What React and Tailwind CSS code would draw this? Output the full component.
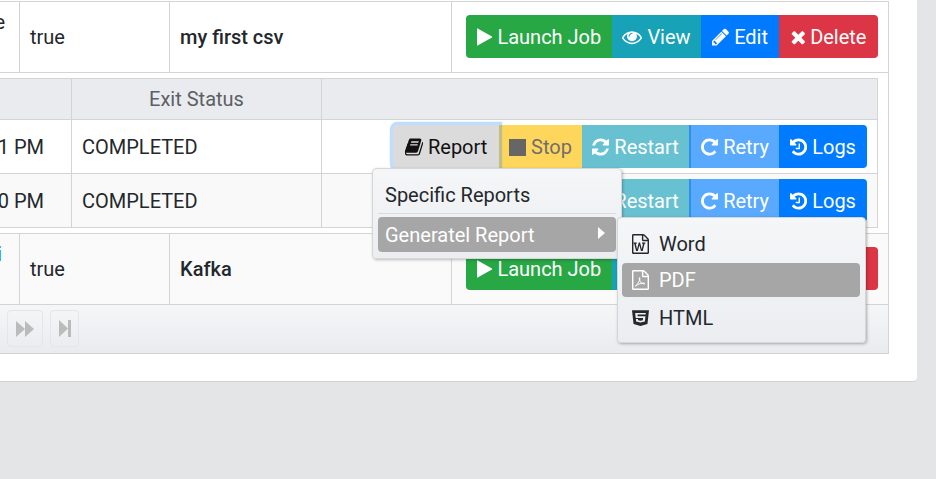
import React from "react";
import { FaHtml5 } from "react-icons/fa";

// Font Awesome 4 glyphs, on the 1792 grid
const PATHS = {
  play: "M1576 927l-1328 738q-23 13-39.500 3t-16.500-36v-1472q0-26 16.500-36t39.500 3l1328 738q23 13 23 31t-23 31z",
  eye: "M1664 960q-152-236-381-353 61 104 61 225 0 185-131.500 316.500t-316.500 131.500-316.500-131.500-131.500-316.500q0-121 61-225-229 117-381 353 133 205 333.500 326.500t434.500 121.500 434.500-121.500 333.500-326.500zm-720-384q0-20-14-34t-34-14q-125 0-214.500 89.500t-89.500 214.500q0 20 14 34t34 14 34-14 14-34q0-86 61-147t147-61q20 0 34-14t14-34zm848 384q0 34-20 69-140 230-376.500 368.500t-499.500 138.500-499.500-139-376.500-368q-20-35-20-69t20-69q140-229 376.500-368t499.500-139 499.500 139 376.500 368q20 35 20 69z",
  pencil: "M491 1536l91-91-235-235-91 91v107h128v128h107zm523-928q0-22-22-22-10 0-17 7l-542 542q-7 7-7 17 0 22 22 22 10 0 17-7l542-542q7-7 7-17zm-54-192l416 416-832 832h-416v-416zm683 96q0 53-37 90l-166 166-416-416 166-165q36-38 90-38 53 0 91 38l235 234q37 39 37 91z",
  times: "M1490 1322q0 40-28 68l-136 136q-28 28-68 28t-68-28l-294-294-294 294q-28 28-68 28t-68-28l-136-136q-28-28-28-68t28-68l294-294-294-294q-28-28-28-68t28-68l136-136q28-28 68-28t68 28l294 294 294-294q28-28 68-28t68 28l136 136q28 28 28 68t-28 68l-294 294 294 294q28 28 28 68z",
  book: "M1639 478q40 57 18 129l-275 906q-19 64-76.500 107.500t-122.500 43.500h-923q-77 0-148.500-53.500t-99.500-131.500q-24-67-2-127 0-4 3-27t4-37q1-8-3-21.500t-3-19.500q2-11 8-21t16.500-23.500 16.500-23.500q23-38 45-91.500t30-91.500q3-10 .5-30t-.5-28q3-11 17-28t17-23q21-36 42-92t25-90q1-9-2.500-32t.5-28q4-13 22-30.500t22-22.500q19-26 42.500-84.500t27.500-96.500q1-8-3-25.500t-2-26.500q2-8 9-18t18-23 17-21q8-12 16.500-30.500t15-35 16-36 19.500-32 26.500-23.500 36-11.500 47.500 5.500l-1 3q38-9 51-9h761q74 0 114 56t18 130l-274 906q-36 119-71.500 153.500t-128.500 34.500h-869q-27 0-38 15-11 16-1 43 24 70 144 70h923q29 0 56-15.500t35-41.500l300-987q7-22 5-57 38 15 59 43zm-1064 2q-4 13 2 22.500t20 9.500h608q13 0 25.500-9.500t16.500-22.500l21-64q4-13-2-22.500t-20-9.500h-608q-13 0-25.500 9.500t-16.500 22.500zm-83 256q-4 13 2 22.500t20 9.500h608q13 0 25.500-9.500t16.500-22.500l21-64q4-13-2-22.500t-20-9.500h-608q-13 0-25.500 9.500t-16.500 22.500z",
  refresh: "M1639 1056q0 5-1 7-64 268-268 434.500t-478 166.500q-146 0-282.500-55t-243.500-157l-129 129q-19 19-45 19t-45-19-19-45v-448q0-26 19-45t45-19h448q26 0 45 19t19 45-19 45l-137 137q71 66 161 102t187 36q134 0 250-65t186-179q11-17 53-117 8-23 30-23h192q13 0 22.500 9.500t9.500 22.500zm25-800v448q0 26-19 45t-45 19h-448q-26 0-45-19t-19-45 19-45l138-138q-148-137-349-137-134 0-250 65t-186 179q-11 17-53 117-8 23-30 23h-199q-13 0-22.500-9.500t-9.500-22.500v-7q65-268 270-434.500t480-166.500q146 0 284 55.500t245 156.500l130-129q19-19 45-19t45 19 19 45z",
  repeat: "M1664 256v448q0 26-19 45t-45 19h-448q-42 0-59-40-17-39 14-69l138-138q-148-137-349-137-104 0-198.500 40.500t-163.500 109.500-109.500 163.500-40.500 198.500 40.500 198.500 109.500 163.500 163.500 109.500 198.500 40.500q119 0 225-52t179-147q7-10 23-12 15 0 25 9l137 138q9 8 9.500 20.500t-7.500 22.500q-109 132-264 204.500t-327 72.500q-156 0-298-61t-245-164-164-245-61-298 61-298 164-245 245-164 298-61q147 0 284.500 55.500t244.500 156.500l130-129q29-31 70-14 39 17 39 59z",
  history: "M1664 896q0 156-61 298t-164 245-245 164-298 61q-172 0-327-72.500t-264-204.500q-7-10-6.500-22.500t8.500-20.500l137-138q10-9 25-9 16 2 23 12 73 95 179 147t225 52q104 0 198.500-40.500t163.500-109.500 109.500-163.500 40.500-198.500-40.500-198.500-109.500-163.500-163.500-109.500-198.500-40.500q-98 0-188 35.500t-160 101.500l137 138q31 30 14 69-17 40-59 40h-448q-26 0-45-19t-19-45v-448q0-42 40-59 39-17 69 14l130 129q107-101 244.500-156.500t284.500-55.500q156 0 298 61t245 164 164 245 61 298zm-640-288v448q0 14-9 23t-23 9h-320q-14 0-23-9t-9-23v-64q0-14 9-23t23-9h224v-352q0-14 9-23t23-9h64q14 0 23 9t9 23z",
  fileOutline: "M1596 380q28 28 48 76t20 88v1152q0 40-28 68t-68 28h-1344q-40 0-68-28t-28-68v-1600q0-40 28-68t68-28h896q40 0 88 20t76 48zm-444-244v376h376q-10-29-22-41l-313-313q-12-12-41-22zm384 1528v-1024h-416q-40 0-68-28t-28-68v-416h-768v1536h1280z",
  wordMark: "M261 768v107h70l164 661h159l128-485q7-20 10-46 2-16 2-24h4l3 24q1 3 3.500 20t5.500 26l128 485h159l164-661h70v-107h-300v107h90l-99 438q-5 20-7 46l-2 21h-4q0-3-.5-6.500t-1.500-8-1-6.500q-1-5-4-21t-5-25l-144-545h-114l-144 545q-2 9-4.500 24.500t-3.500 21.500l-4 21h-4l-2-21q-2-26-7-46l-99-438h90v-107h-300z",
};

function Fa({ name, x = 128, w = 1536, size = 20 }) {
  return (
    <svg
      viewBox={`${x} 0 ${w} 1792`}
      width={(size * w) / 1792}
      height={size}
      className="fill-current shrink-0"
    >
      <path d={PATHS[name]} />
    </svg>
  );
}

function FileIcon({ kind }) {
  return (
    <svg viewBox="128 0 1536 1792" width="17" height="20" className="fill-current shrink-0">
      <path d={PATHS.fileOutline} />
      {kind === "word" && <path d={PATHS.wordMark} />}
      {kind === "pdf" && (
        <path
          d="M430 1450 Q 630 1340 800 950 Q 870 770 830 680 Q 770 650 780 770 Q 800 1010 1000 1180 Q 1180 1300 1300 1230 Q 1280 1150 1100 1170 Q 750 1200 430 1450 Z"
          fill="none"
          stroke="currentColor"
          strokeWidth="85"
        />
      )}
    </svg>
  );
}

function Btn({ icon, label, className }) {
  return (
    <button className={`h-[43px] pt-[1px] flex items-center justify-center gap-[5px] text-[20px] leading-none ${className}`}>
      {icon}
      <span>{label}</span>
    </button>
  );
}

// main row action buttons
function JobButtons() {
  return (
    <div className="flex text-white mb-[1px]">
      <Btn icon={<Fa name="play" x={192} w={1408} />} label="Launch Job" className="w-[146px] bg-[#28a745] rounded-l-[4px]" />
      <Btn icon={<Fa name="eye" x={0} w={1792} />} label="View" className="w-[89px] bg-[#17a2b8]" />
      <Btn icon={<Fa name="pencil" />} label="Edit" className="w-[78px] bg-[#007bff]" />
      <Btn icon={<Fa name="times" x={240} w={1310} />} label="Delete" className="w-[99px] bg-[#dc3545] rounded-r-[4px]" />
    </div>
  );
}

function ExecutionButtons({ withMenu }) {
  return (
    <div className="flex text-white">
      {withMenu ? (
        <div className="relative z-10">
          <button className="w-[106px] h-[43px] pt-[1px] flex items-center justify-center gap-[5px] text-[20px] leading-none text-[#111111] bg-[#dbdbdb] rounded-l-[4px] shadow-[0_0_0_3.2px_rgba(0,123,255,0.25)]">
            <Fa name="book" x={40} w={1640} />
            <span>Report</span>
          </button>
          <ReportMenu />
        </div>
      ) : (
        <button className="w-[106px] h-[43px] pt-[1px] flex items-center justify-center gap-[5px] text-[20px] leading-none text-[#111111] bg-[#f0f3f5] rounded-l-[4px]">
          <Fa name="book" x={40} w={1640} />
          <span>Report</span>
        </button>
      )}
      <Btn icon={<span className="w-[17px] h-[17px] bg-[#666666] block"></span>} label="Stop" className="w-[83px] bg-[#ffd65c] text-[#6f6f6f]" />
      <Btn icon={<Fa name="refresh" />} label="Restart" className="w-[107px] bg-[#68c1d1]" />
      <Btn icon={<Fa name="repeat" />} label="Retry" className="w-[90px] bg-[#59a9ff] border-l-[2px] border-[#2f90ea]" />
      <Btn icon={<Fa name="history" />} label="Logs" className="w-[88px] bg-[#007bff] rounded-r-[4px]" />
    </div>
  );
}

function ReportMenu() {
  return (
    <div className="absolute left-[-21px] top-[43px] w-[250px] h-[91px] px-[5px] text-[20px] leading-none text-[#23282c] border border-[#d5d6d8] rounded-[4px] bg-gradient-to-b from-[#f5f6f8] to-[#ecedf0] shadow-[1px_1px_3px_rgba(0,0,0,0.25)]">
      <div className="h-[45px] pl-[7px] pt-[8px] flex items-center border-b border-[#d9dadc]">Specific Reports</div>
      <div className="relative mt-[3px] h-[35px] pl-[7px] flex items-center justify-between pr-[11px] bg-[#a6a6a6] text-white rounded-[4px]">
        <span>Generatel Report</span>
        <span className="mb-[3px] w-0 h-0 border-y-[6px] border-y-transparent border-l-[7px] border-l-white"></span>
        <div className="absolute left-[239px] top-0 w-[249px] h-[126px] pl-[4px] pr-[5px] pt-[9px] flex flex-col text-[#23282c] border border-[#d5d6d8] rounded-[4px] bg-gradient-to-b from-[#f5f6f8] to-[#ecedf0] shadow-[1px_1px_3px_rgba(0,0,0,0.3)]">
          <SubItem icon={<FileIcon kind="word" />} label="Word" className="mb-[2px]" />
          <SubItem icon={<FileIcon kind="pdf" />} label="PDF" className="mb-[4px] bg-[#a6a6a6] text-white" />
          <SubItem
            icon={<FaHtml5 preserveAspectRatio="none" className="w-[17px] h-[18px] shrink-0" />}
            label="HTML"
          />
        </div>
      </div>
    </div>
  );
}

function SubItem({ icon, label, className = "" }) {
  return (
    <div className={`h-[34px] shrink-0 pl-[10px] flex items-center gap-[10px] rounded-[4px] ${className}`}>
      {icon}
      <span>{label}</span>
    </div>
  );
}

function JobRow({ first, firstClass, name, className }) {
  return (
    <div className={`flex h-[71px] border-b border-[#d4d4d5] ${className}`}>
      <div className={`w-[20px] border-r border-[#d4d4d5] overflow-hidden flex justify-end pt-[5px] ${firstClass}`}>
        <span>{first}</span>
      </div>
      <div className="w-[150px] pl-[10px] border-r border-[#d4d4d5] flex items-center">true</div>
      <div className="w-[282px] pl-[10px] border-r border-[#d4d4d5] flex items-center font-medium">{name}</div>
      <div className="flex-1 pl-[14px] flex items-center">
        <JobButtons />
      </div>
    </div>
  );
}

function ExecutionRow({ time, className, withMenu }) {
  return (
    <div className={`flex h-[54px] border-b border-[#d4d4d5] ${className}`}>
      <div className="w-[72px] pr-[27px] border-r border-[#d4d4d5] flex items-center justify-end whitespace-nowrap">{time}</div>
      <div className="w-[250px] pl-[10px] border-r border-[#d4d4d5] flex items-center">COMPLETED</div>
      <div className="flex-1 pr-[10px] flex items-center justify-end">
        <ExecutionButtons withMenu={withMenu} />
      </div>
    </div>
  );
}

export default function App() {
  return (
    <div className="h-[479px] overflow-hidden bg-[#e4e5e6] font-['Roboto',sans-serif] text-[20px] text-[#23282c]">
      <div className="w-[917px] h-[382px] bg-white rounded-br-[4px] border-b border-[#cfd0d1]">
        <div className="w-[889px] pt-[1px]">
          <div className="border-r border-[#d4d4d5]">
            <div className="border-t border-[#d4d4d5]">
              <JobRow first="e" firstClass="pr-[14px]" name="my first csv" className="bg-white" />
            </div>

            {/* nested executions table */}
            <div className="h-[161px] pt-[5px] pr-[10px] border-b border-[#d4d4d5]">
              <div className="border-t border-r border-[#d4d4d5]">
                <div className="flex h-[41px] bg-[#e9ebef] border-b border-[#d4d4d5] text-[#5c5f63]">
                  <div className="w-[72px] border-r border-[#d4d4d5]"></div>
                  <div className="w-[250px] border-r border-[#d4d4d5] flex items-center justify-center">Exit Status</div>
                  <div className="flex-1"></div>
                </div>
                <ExecutionRow time="1 PM" className="bg-white" withMenu />
                <ExecutionRow time="0 PM" className="bg-[#f9f9f9]" />
              </div>
            </div>

            <JobRow first="i" firstClass="pr-[17px] text-[#1b8fdc]" name="Kafka" className="bg-[#fafafa]" />
          </div>

          <div className="h-[49px] pl-[7px] pb-[1px] flex items-center gap-[7px] border-r border-b border-[#d4d4d5] bg-gradient-to-b from-[#f5f6f8] to-[#e9ebee]">
            <button className="w-[36px] h-[37px] flex items-center justify-center border border-[#e5e6e9] rounded-[4px] text-[#bbbbbb]">
              <svg viewBox="0 0 18 16" className="w-[18px] h-[16px] fill-current">
                <polygon points="0,0 9,8 0,16" />
                <polygon points="9,0 18,8 9,16" />
              </svg>
            </button>
            <button className="w-[29px] h-[37px] flex items-center justify-center border border-[#e5e6e9] rounded-[4px] text-[#bbbbbb]">
              <svg viewBox="0 0 12 17" className="w-[12px] h-[17px] fill-current">
                <polygon points="0,0 9,8.500 0,17" />
                <rect x="9" y="0" width="3" height="17" />
              </svg>
            </button>
          </div>
        </div>
      </div>
    </div>
  );
}
